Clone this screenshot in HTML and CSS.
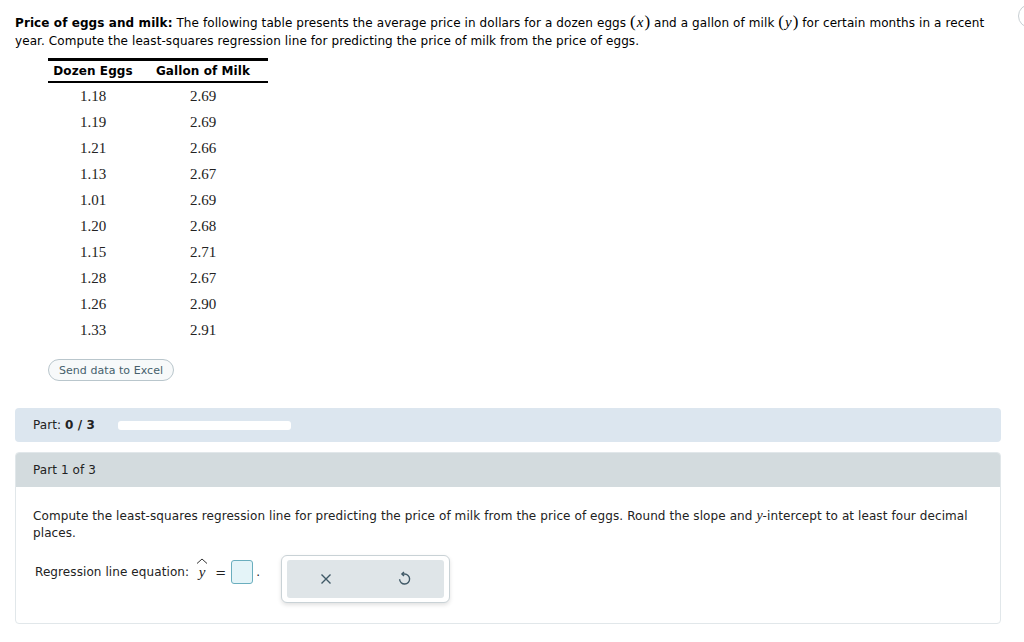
FILE: index.html
```html
<!DOCTYPE html>
<html>
<head>
<meta charset="utf-8" />
<title>Price of eggs and milk</title>
<link rel="stylesheet" href="styles.css">
</head>
<body>
<div class="page">
	<p class="intro"><b>Price of eggs and milk:</b> The following table presents the average price in dollars for a dozen eggs <span class="m"><span class="p">(</span><i>x</i><span class="p">)</span></span> and a gallon of milk <span class="m"><span class="p">(</span><i>y</i><span class="p">)</span></span> for certain months in a recent year. Compute the least-squares regression line for predicting the price of milk from the price of eggs.</p>

	<table class="data">
		<thead>
			<tr><th class="c1">Dozen Eggs</th><th class="c2">Gallon of Milk</th></tr>
		</thead>
		<tbody>
			<tr><td>1.18</td><td>2.69</td></tr>
			<tr><td>1.19</td><td>2.69</td></tr>
			<tr><td>1.21</td><td>2.66</td></tr>
			<tr><td>1.13</td><td>2.67</td></tr>
			<tr><td>1.01</td><td>2.69</td></tr>
			<tr><td>1.20</td><td>2.68</td></tr>
			<tr><td>1.15</td><td>2.71</td></tr>
			<tr><td>1.28</td><td>2.67</td></tr>
			<tr><td>1.26</td><td>2.90</td></tr>
			<tr><td>1.33</td><td>2.91</td></tr>
		</tbody>
	</table>

	<div class="excel"><button class="pill">Send data to Excel</button></div>

	<div class="progress">
		<span>Part: <b>0 / 3</b></span>
		<div class="track"></div>
	</div>

	<div class="part">
		<div class="part-head">Part 1 of 3</div>
		<div class="part-body">
			<p>Compute the least-squares regression line for predicting the price of milk from the price of eggs. Round the slope and <i class="mi">y</i>-intercept to at least four decimal places.</p>
			<div class="answer">
				<div class="eqn">
					<span class="label">Regression line equation:</span>
					<span class="yhat"><svg class="hat" width="12" height="6" viewBox="0 0 12 6"><path d="M1 5.5 L6 1 L11 5.5" stroke="#333" stroke-width="1" fill="none"/></svg><i>y</i></span>
					<span class="eq">=</span>
					<span class="box"></span><span class="dot">.</span>
				</div>
				<div class="tools">
					<div class="tools-inner">
						<button class="tool" title="Clear">
							<svg width="12" height="12" viewBox="0 0 12 12"><path d="M1.5 1.5 L10.5 10.5 M10.5 1.5 L1.5 10.5" stroke="#3f5866" stroke-width="1.4" fill="none"/></svg>
						</button>
						<button class="tool" title="Undo">
							<svg width="13" height="16" viewBox="0 0 13 16"><path d="M4 3 H6.5 A5 5 0 1 1 1.6 8.2" stroke="#3f5866" stroke-width="1.4" fill="none"/><path d="M6 0.9 L3.9 3 L6 5.1" stroke="#3f5866" stroke-width="1.4" fill="none"/></svg>
						</button>
					</div>
				</div>
			</div>
		</div>
	</div>
</div>
<div class="side-btn"></div>
</body>
</html>
```

FILE: styles.css
```css
body { margin: 0; background: #fff; font-family: "DejaVu Sans", Verdana, sans-serif; font-size: 12px; letter-spacing: 0.09px; color: #000; }
.page { padding: 13px 23px 18px 15px; }

.intro { margin: 0; line-height: 18px; }
	.intro b { font-weight: bold; }
	.m { font-family: "Liberation Serif", serif; font-size: 15px; letter-spacing: 0; }
		.m .p { font-size: 17px; }
		.m i { padding: 0 1px; }

.data { margin: 8px 0 0 33px; border-collapse: collapse; }
	.data th {
		font-weight: bold;
		font-size: 12px;
		height: 20px;
		padding: 0;
		border-top: 3px solid #000;
		border-bottom: 2px solid #000;
		text-align: center;
	}
	.data .c1 { width: 90px; }
	.data .c2 { width: 130px; }
	.data td {
		font-family: "Liberation Serif", serif;
		font-size: 15px;
		letter-spacing: 0;
		height: 26px;
		padding: 0;
		text-align: center;
		color: #222;
	}

.excel { margin: 16px 0 0 33px; }
	.pill {
		font-family: inherit;
		font-size: 11px;
		letter-spacing: 0.05px;
		color: #46606c;
		background: #f7f9fa;
		border: 1px solid #b9c6cc;
		border-radius: 11px;
		height: 22px;
		padding: 0 10px;
	}

.progress {
	margin-top: 27px;
	height: 34px;
	background: #dce6ef;
	border-radius: 4px;
	display: flex;
	align-items: center;
	padding-left: 18px;
	gap: 23px;
	color: #222;
}
	.progress b { font-weight: bold; }
	.track { width: 173px; height: 9px; background: #fff; border-radius: 3px; }

.part { margin-top: 10px; border: 1px solid #e1e7ea; border-radius: 4px; overflow: hidden; }
	.part-head { background: #d3dbde; height: 34px; display: flex; align-items: center; padding-left: 17px; color: #222; }
	.part-body { padding: 20px 17px 20px 17px; color: #222; }
		.part-body p { margin: 0; line-height: 17px; }
		.mi { font-family: "Liberation Serif", serif; font-size: 14px; letter-spacing: 0; }

.answer { display: flex; align-items: flex-start; margin-top: 13px; padding-left: 2px; }
	.eqn { display: flex; align-items: center; height: 24px; margin-top: 5px; }
	.label { margin-right: 7px; }
	.yhat { position: relative; font-family: "Liberation Serif", serif; font-size: 15px; width: 12px; text-align: center; }
		.hat { position: absolute; left: 0; top: -6px; }
	.eq { margin: 0 5px 0 7px; font-size: 13px; }
	.box {
		width: 20px;
		height: 22px;
		border: 1px solid #6aaebe;
		border-radius: 3px;
		background: #e4f4f8;
	}
	.dot { margin-left: 3px; margin-right: 21px; }

.tools {
	border: 1px solid #c9d2d6;
	border-radius: 6px;
	background: #fff;
	padding: 4px 5px;
	box-shadow: 0 2px 4px rgba(0, 0, 0, 0.12);
}
	.tools-inner { display: flex; background: #dfe5e8; border-radius: 3px; width: 157px; height: 38px; }
	.tool { flex: 1; border: 0; background: transparent; display: flex; align-items: center; justify-content: center; padding: 0; }

.side-btn {
	position: absolute;
	top: 4px;
	left: 1018px;
	width: 22px;
	height: 22px;
	border: 1px solid #c8cfd3;
	border-radius: 50%;
}
```
